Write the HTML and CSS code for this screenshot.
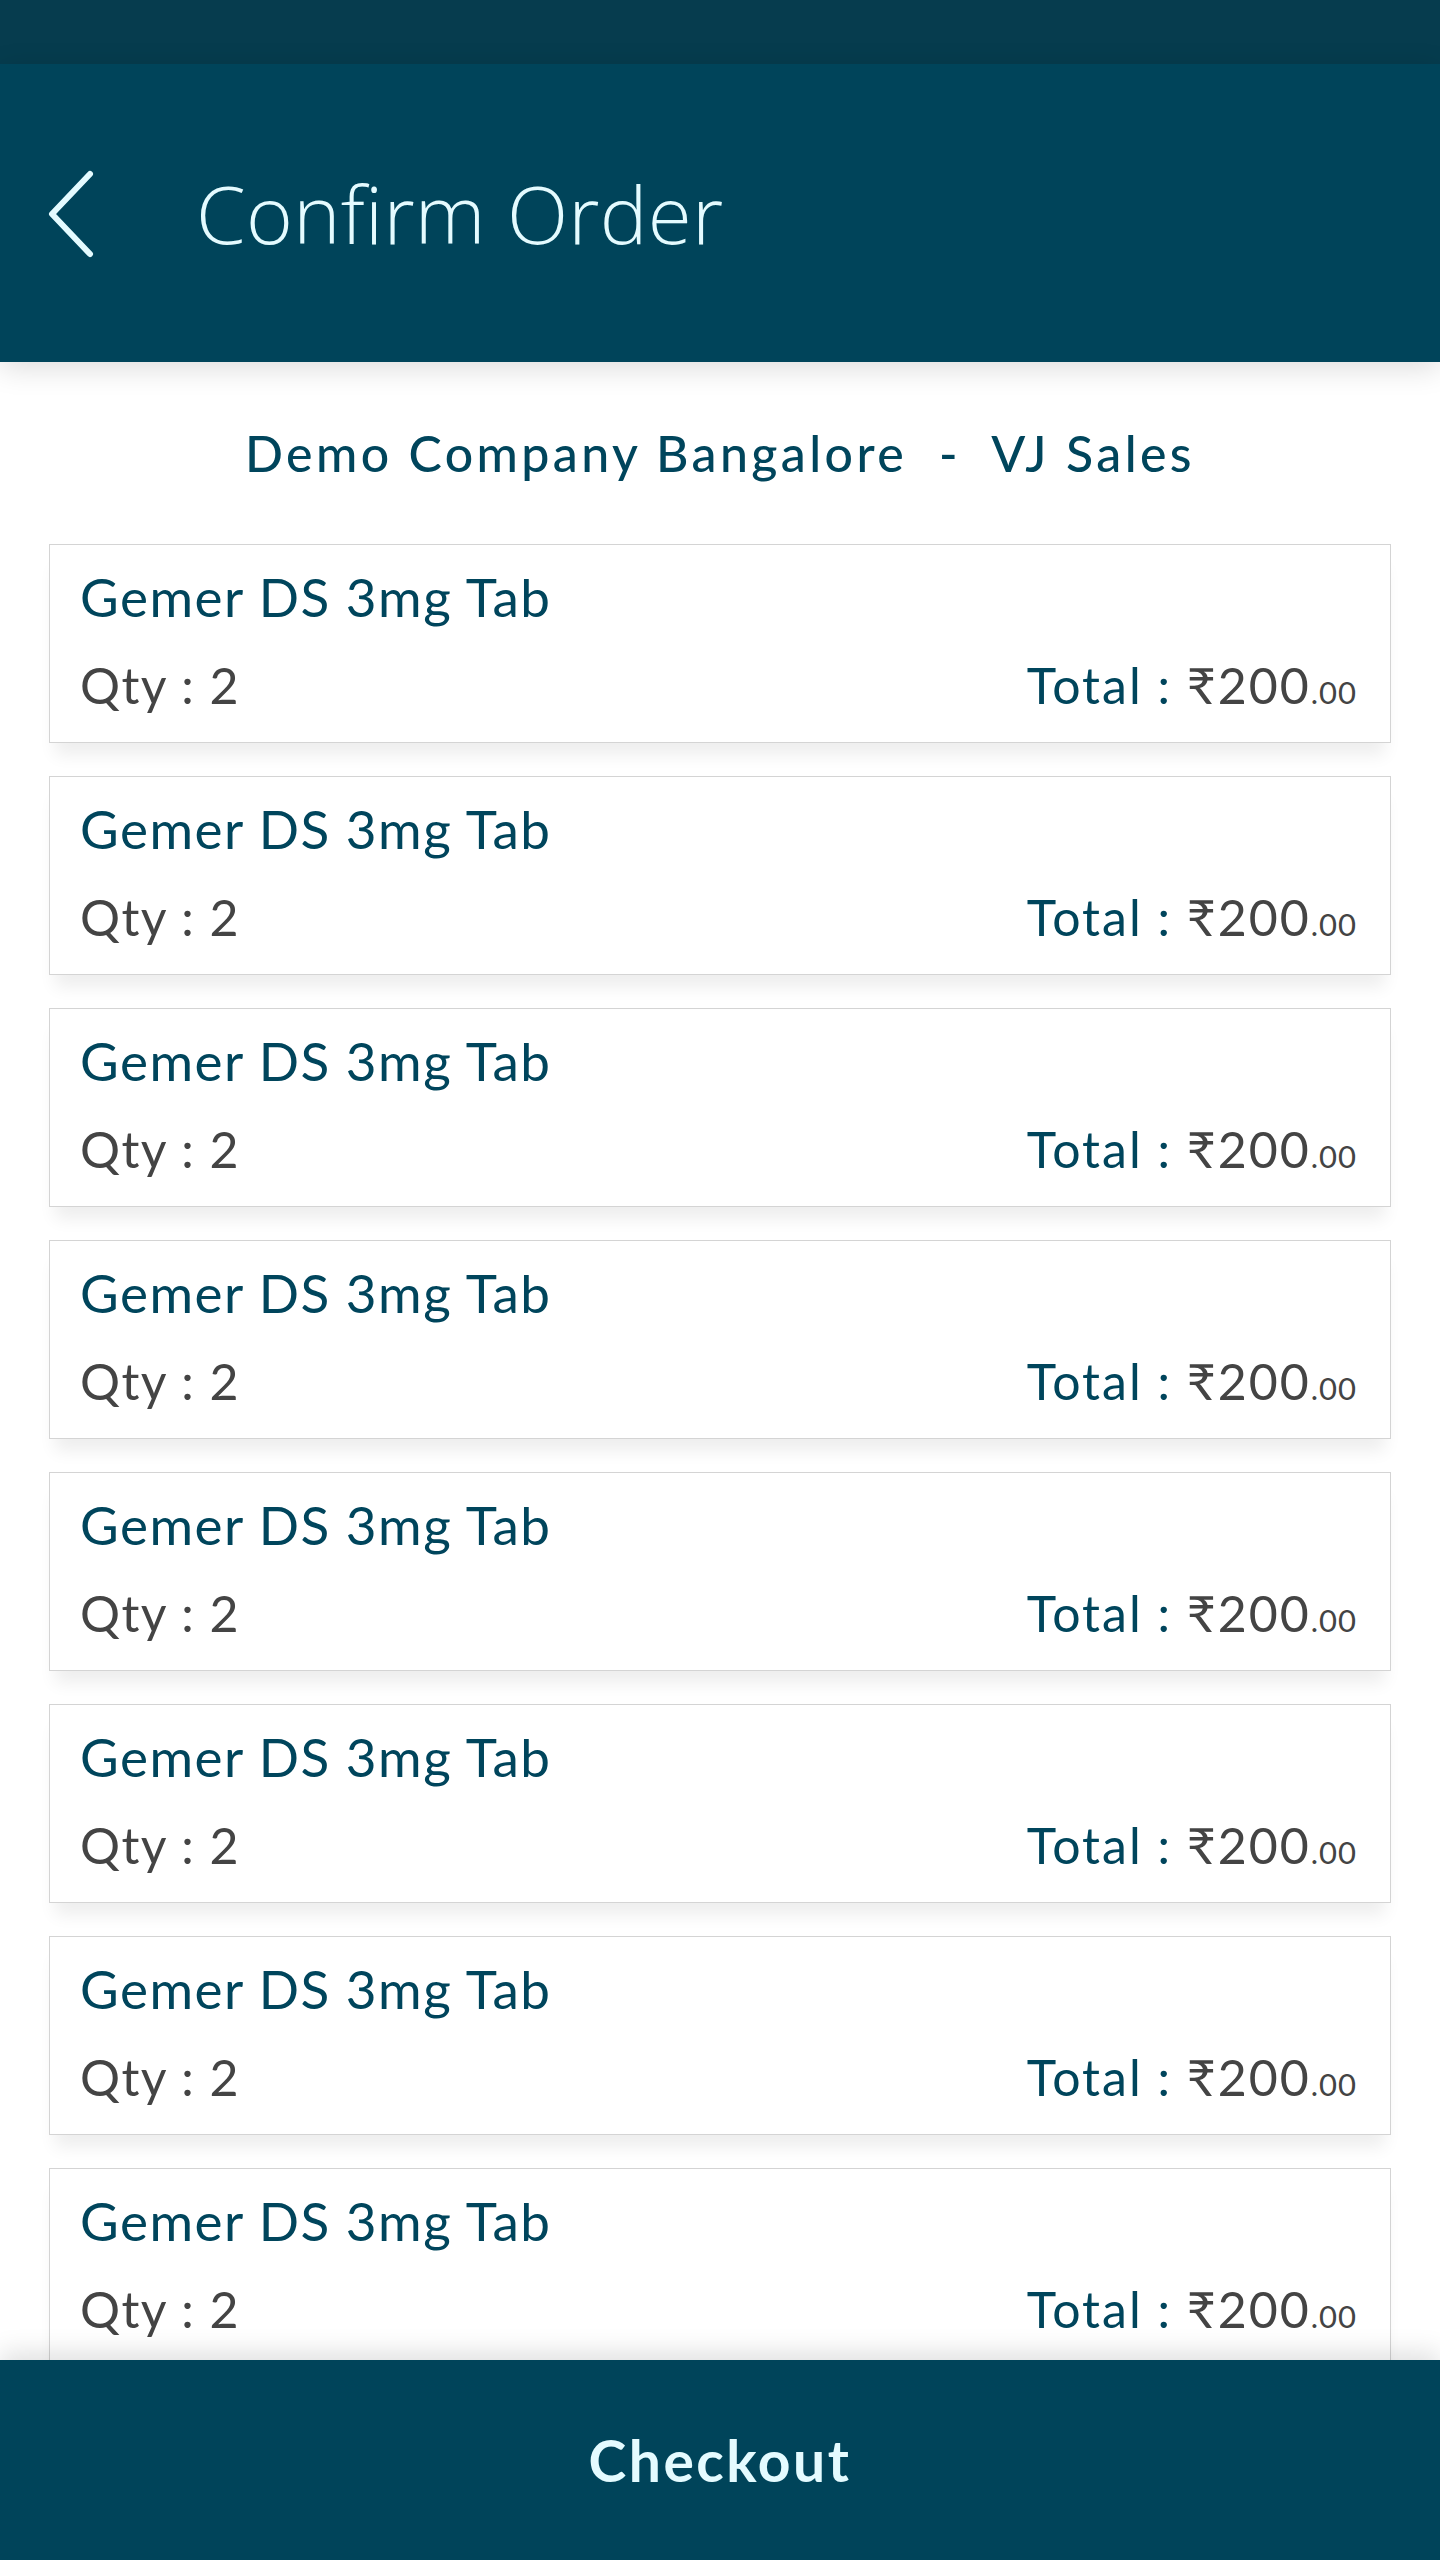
FILE: index.html
```html
<!DOCTYPE html>
<html>
<head>
<meta charset="utf-8">
<link rel="stylesheet" href="styles.css">
</head>
<body>
<div class="app">
  <div class="status-bar"></div>
  <header class="app-bar">
    <svg class="back" width="50" height="90" viewBox="0 0 50 90"><path d="M44 6 L6 46 L44 86" fill="none" stroke="#e4fbff" stroke-width="6" stroke-linecap="round" stroke-linejoin="round"/></svg>
    <h1 class="title">Confirm Order</h1>
  </header>
  <main class="content">
    <h2 class="subtitle">Demo Company Bangalore  -  VJ Sales</h2>
    <ul class="list">
      <li class="card"><div class="name">Gemer DS 3mg Tab</div><div class="row"><span class="qty">Qty : 2</span><span class="total">Total : <span class="amt">₹200<span class="dec">.00</span></span></span></div></li>
      <li class="card"><div class="name">Gemer DS 3mg Tab</div><div class="row"><span class="qty">Qty : 2</span><span class="total">Total : <span class="amt">₹200<span class="dec">.00</span></span></span></div></li>
      <li class="card"><div class="name">Gemer DS 3mg Tab</div><div class="row"><span class="qty">Qty : 2</span><span class="total">Total : <span class="amt">₹200<span class="dec">.00</span></span></span></div></li>
      <li class="card"><div class="name">Gemer DS 3mg Tab</div><div class="row"><span class="qty">Qty : 2</span><span class="total">Total : <span class="amt">₹200<span class="dec">.00</span></span></span></div></li>
      <li class="card"><div class="name">Gemer DS 3mg Tab</div><div class="row"><span class="qty">Qty : 2</span><span class="total">Total : <span class="amt">₹200<span class="dec">.00</span></span></span></div></li>
      <li class="card"><div class="name">Gemer DS 3mg Tab</div><div class="row"><span class="qty">Qty : 2</span><span class="total">Total : <span class="amt">₹200<span class="dec">.00</span></span></span></div></li>
      <li class="card"><div class="name">Gemer DS 3mg Tab</div><div class="row"><span class="qty">Qty : 2</span><span class="total">Total : <span class="amt">₹200<span class="dec">.00</span></span></span></div></li>
      <li class="card"><div class="name">Gemer DS 3mg Tab</div><div class="row"><span class="qty">Qty : 2</span><span class="total">Total : <span class="amt">₹200<span class="dec">.00</span></span></span></div></li>
    </ul>
  </main>
  <footer class="checkout">Checkout</footer>
</div>
</body>
</html>
```
FILE: styles.css
```css
* { box-sizing: border-box; }
html, body { margin: 0; padding: 0; background: #fff; }
body { font-family: "Lato", "Noto Sans", sans-serif; }
.app { height: 2560px; display: flex; flex-direction: column; overflow: hidden; }
.status-bar { height: 64px; background: #063c4e; flex: none; }
.app-bar {
  height: 298px; flex: none; background: #00445a;
  display: flex; align-items: center; padding-left: 46px;
  box-shadow: 0 6px 28px rgba(0,0,0,0.14);
  position: relative; z-index: 2;
}
.back { flex: none; }
.title {
  margin: 0 0 0 100px; font-family: "Open Sans", sans-serif; font-weight: 300;
  font-size: 80px; color: #e4fbff; line-height: 1.362; letter-spacing: 0.3px;
}
.content { flex: 1; overflow: hidden; position: relative; z-index: 1; }
.subtitle {
  margin: 62px 0 0; text-align: center; white-space: pre;
  font-size: 50px; line-height: 58px; font-weight: 500; color: #00455c;
  letter-spacing: 3.4px;
}
.list { list-style: none; margin: 62px 49px 0; padding: 0; display: flex; flex-direction: column; gap: 33px; }
.card {
  border: 1px solid #d4d4d4; background: #fff;
  padding: 21px 33px 27px 30px;
  box-shadow: 0 18px 16px -6px rgba(0,0,0,0.07);
}
.name { font-size: 53px; line-height: 62px; color: #00455c; letter-spacing: 1.5px; white-space: nowrap; }
.row {
  margin-top: 27px; height: 60px; display: flex; justify-content: space-between; align-items: baseline;
  font-size: 50px; line-height: 60px; letter-spacing: 2px; white-space: nowrap;
}
.qty { color: #444; letter-spacing: 1.5px; }
.total { color: #00455c; }
.amt { color: #444; }
.dec { font-size: 0.62em; letter-spacing: 1px; }
.checkout {
  height: 200px; flex: none; background: #00445a; color: #e4fbff;
  display: flex; align-items: center; justify-content: center;
  font-size: 57px; font-weight: 700; letter-spacing: 2.5px;
  box-shadow: 0 -8px 24px rgba(0,0,0,0.12); position: relative; z-index: 2;
}
```
